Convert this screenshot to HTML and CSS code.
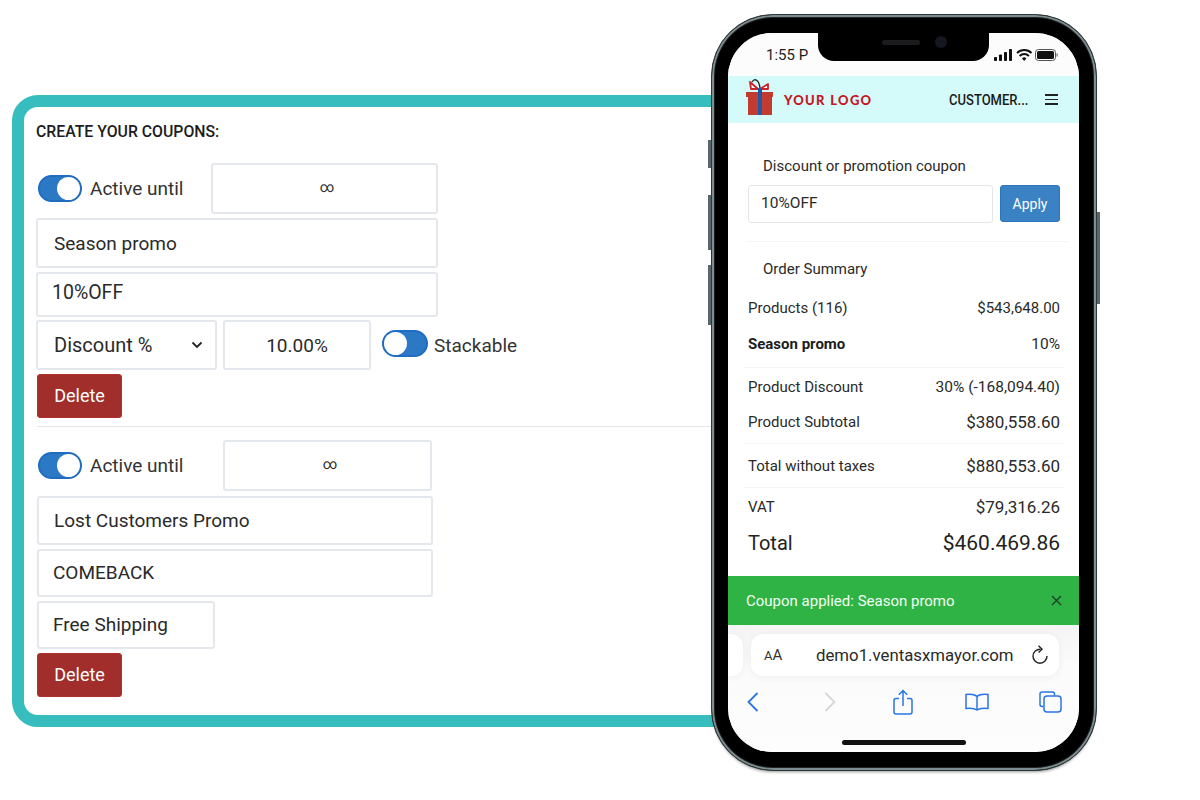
FILE: index.html
```html
<!DOCTYPE html>
<html lang="en">
<head>
  <meta charset="UTF-8">
  <title>Create your coupons</title>
  <link rel="stylesheet" href="styles.css">
</head>
<body>
  <div class="card">
    <h1 class="card-title">CREATE YOUR COUPONS:</h1>

    <div class="coupon">
      <div class="row row-active">
        <span class="toggle on"></span>
        <span class="toggle-label">Active until</span>
        <div class="field field-until">∞</div>
      </div>
      <div class="field field-name">Season promo</div>
      <div class="field field-code">10%OFF</div>
      <div class="row row-type">
        <div class="field field-select">Discount %
          <svg class="chevron" width="12" height="8" viewBox="0 0 12 8"><path d="M1.5 1.5 6 6l4.500-4.500" fill="none" stroke="#222" stroke-width="1.8"/></svg>
        </div>
        <div class="field field-amount">10.00%</div>
        <span class="toggle off"></span>
        <span class="toggle-label stack-label">Stackable</span>
      </div>
      <button class="btn-delete">Delete</button>
    </div>

    <hr class="card-rule">

    <div class="coupon coupon-second">
      <div class="row row-active">
        <span class="toggle on"></span>
        <span class="toggle-label">Active until</span>
        <div class="field field-until">∞</div>
      </div>
      <div class="field field-name">Lost Customers Promo</div>
      <div class="field field-code">COMEBACK</div>
      <div class="field field-shipping">Free Shipping</div>
      <button class="btn-delete">Delete</button>
    </div>
  </div>

  <!-- phone sits on top of the card -->
  <div class="phone">
    <span class="side-btn side-a"></span>
    <span class="side-btn side-b"></span>
    <span class="side-btn side-c"></span>
    <span class="side-btn side-d"></span>
    <div class="screen">
      <div class="notch"><span class="speaker"></span><span class="camera"></span></div>

      <div class="status-bar">
        <span class="clock">1:55 P</span>
        <svg class="status-icons" width="64" height="14" viewBox="0 0 64 14">
          <rect x="0" y="9" width="3" height="4" rx=".8" fill="#111"/>
          <rect x="5" y="6.500" width="3" height="6.500" rx=".8" fill="#111"/>
          <rect x="10" y="4" width="3" height="9" rx=".8" fill="#111"/>
          <rect x="15" y="1" width="3" height="12" rx=".8" fill="#111"/>
          <path d="M23 5a10.500 10.500 0 0 1 14.500 0M25.600 8a6.700 6.700 0 0 1 9.300 0" fill="none" stroke="#111" stroke-width="2"/>
          <path d="M28 10.400a3.200 3.200 0 0 1 4.400 0L30.200 13z" fill="#111"/>
          <rect x="41.500" y="1.500" width="20" height="11" rx="3" fill="none" stroke="#555" stroke-width="1"/>
          <rect x="43" y="3" width="17" height="8" rx="1.600" fill="#111"/>
          <rect x="62.500" y="5.300" width="1.300" height="3.400" rx=".6" fill="#777"/>
        </svg>
      </div>

      <header class="shop-header">
        <svg class="gift" width="30" height="39" viewBox="0 0 30 39">
          <path d="M5 5l8 7H6zM23 7l-8 5h8z" fill="#fff" stroke="#cc2229" stroke-width="1.800" stroke-linejoin="round"/>
          <path d="M7 5c2-4 7-3 8 6" fill="none" stroke="#222" stroke-width="1.300"/>
          <rect x="1" y="15" width="27" height="5" fill="#c23b30"/>
          <rect x="3" y="20" width="24" height="18" fill="#c23b30"/>
          <rect x="13" y="11" width="4" height="27" fill="#2456a8"/>
        </svg>
        <span class="logo-text">YOUR LOGO</span>
        <span class="customer">CUSTOMER...</span>
        <span class="burger"><i></i><i></i><i></i></span>
      </header>

      <main class="checkout">
        <div class="section-label">Discount or promotion coupon</div>
        <div class="coupon-form">
          <div class="coupon-input">10%OFF</div>
          <button class="btn-apply">Apply</button>
        </div>
        <div class="rule rule-a"></div>
        <div class="section-label summary-label">Order Summary</div>
        <div class="sum-row r36"><span>Products (116)</span><span>$543,648.00</span></div>
        <div class="sum-row r36"><b>Season promo</b><span class="mid">10%</span></div>
        <div class="rule rule-b"></div>
        <div class="sum-row r38"><span>Product Discount</span><span class="mid">30% (-168,094.40)</span></div>
        <div class="sum-row r32"><span>Product Subtotal</span><span class="big">$380,558.60</span></div>
        <div class="rule rule-c"></div>
        <div class="sum-row r43"><span>Total without taxes</span><span class="big">$880,553.60</span></div>
        <div class="rule"></div>
        <div class="sum-row r38"><span>VAT</span><span class="big">$79,316.26</span></div>
        <div class="sum-row total"><span>Total</span><span class="total-value">$460.469.86</span></div>
      </main>

      <div class="toast">
        <span>Coupon applied: Season promo</span>
        <svg width="11" height="11" viewBox="0 0 11 11"><path d="M1 1l9 9M10 1l-9 9" stroke="#1f3d28" stroke-width="1.400"/></svg>
      </div>

      <div class="browser">
        <div class="address-row">
          <div class="prev-tab"></div>
          <div class="address">
            <span class="aa"><small>A</small>A</span>
            <span class="url">demo1.ventasxmayor.com</span>
            <svg width="18" height="20" viewBox="0 0 18 20"><path d="M9.500 4.200A7 7 0 1 0 16 11" fill="none" stroke="#222" stroke-width="1.400"/><path d="M7.500 .8 11 4.200 7.500 7.400" fill="none" stroke="#222" stroke-width="1.400"/></svg>
          </div>
        </div>
        <div class="toolbar">
          <svg width="14" height="22" viewBox="0 0 14 22"><path d="M11.500 2 2.500 11l9 9" fill="none" stroke="#2a74e6" stroke-width="1.800"/></svg>
          <svg class="tool-forward" width="14" height="22" viewBox="0 0 14 22"><path d="M2.500 2l9 9-9 9" fill="none" stroke="#d4d6d8" stroke-width="1.800"/></svg>
          <svg class="tool-share" width="20" height="26" viewBox="0 0 20 26"><path d="M6 9.500H3a2 2 0 0 0-2 2V23a2 2 0 0 0 2 2h14a2 2 0 0 0 2-2V11.500a2 2 0 0 0-2-2h-3M10 17V2M5.800 5.800 10 1.500l4.200 4.300" fill="none" stroke="#2a74e6" stroke-width="1.500"/></svg>
          <svg class="tool-book" width="24" height="18" viewBox="0 0 24 18"><path d="M12 3.500C10 1.800 6 1 1 1.500V15.500C6 15 10 15.500 12 17c2-1.500 6-2 11-1.500V1.500C18 1 14 1.800 12 3.500zM12 3.500V17" fill="none" stroke="#2a74e6" stroke-width="1.500"/></svg>
          <svg class="tool-tabs" width="23" height="22" viewBox="0 0 23 22"><path d="M4.500 15.500H3a2 2 0 0 1-2-2V3a2 2 0 0 1 2-2h10.500a2 2 0 0 1 2 2v1.500" fill="none" stroke="#2a74e6" stroke-width="1.500"/><rect x="5" y="5" width="17" height="16" rx="3" fill="none" stroke="#2a74e6" stroke-width="1.500"/></svg>
        </div>
        <div class="home-bar"></div>
      </div>
    </div>
  </div>
</body>
</html>
```

FILE: styles.css
```css
* {
  margin: 0;
  padding: 0;
  box-sizing: border-box;
}
body {
  font-family: Roboto, "Liberation Sans", sans-serif;
  background: #fff;
  color: #222;
  width: 1200px;
  height: 800px;
  position: relative;
  overflow: hidden;
  padding: 95px 0 0 12px;
}

/* coupon card */
.card {
  width: 730px;
  height: 632px;
  background: #fff;
  border: 12px solid #38bdbe;
  border-radius: 26px;
  padding: 12px;
}
.card-title {
  font-size: 17px;
  font-weight: 500;
  line-height: 24px;
  color: #1c1c1c;
  margin-bottom: 20px;
  transform: scaleX(.93);
  transform-origin: left center;
  white-space: nowrap;
}
.row {
  display: flex;
  align-items: center;
}
.field {
  border: 2px solid #e4e7ec;
  border-radius: 3px;
  font-size: 19px;
  color: #2a2a2a;
  display: flex;
  align-items: center;
  background: #fff;
}
.row-active {
  height: 51px;
  margin-bottom: 4px;
  padding-left: 2px;
}
.toggle-label {
  font-size: 19px;
  color: #333;
  margin-left: 8px;
}
.toggle {
  display: block;
  flex: none;
  width: 44px;
  height: 27px;
  border-radius: 14px;
  background: #2b78c5;
  border: 2px solid #1f6cc0;
  position: relative;
}
.toggle::after {
  content: "";
  position: absolute;
  top: 0;
  width: 23px;
  height: 23px;
  border-radius: 50%;
  background: #fff;
}
.toggle.on::after { right: 0; }
.toggle.off::after { left: 0; }
.field-until {
  width: 227px;
  height: 51px;
  margin-left: 28px;
  justify-content: center;
  padding-left: 4px;
  padding-bottom: 3px;
  font-size: 14px;
}
.field-name {
  width: 402px;
  height: 50px;
  margin-bottom: 4px;
  padding-left: 16px;
}
.field-code {
  width: 402px;
  height: 45px;
  margin-bottom: 3px;
  padding: 0 0 4px 14px;
  font-size: 19.500px;
}
.row-type {
  height: 50px;
  margin-bottom: 4px;
}
.field-select {
  width: 181px;
  height: 50px;
  padding: 0 12px 0 16px;
  justify-content: space-between;
  font-size: 20px;
}
.field-amount {
  width: 148px;
  height: 50px;
  margin-left: 6px;
  justify-content: center;
}
.row-type .toggle {
  margin-left: 11px;
  width: 46px;
  margin-top: -4px;
}
.stack-label { margin-left: 6px; }
.btn-delete {
  display: block;
  width: 85px;
  height: 44px;
  margin-left: 1px;
  padding-bottom: 2px;
  background: #a12e2a;
  border: 1px solid #b0302b;
  border-radius: 3px;
  color: #fff;
  font-family: inherit;
  font-size: 18px;
}
.card-rule {
  border: none;
  border-top: 1px solid #e2e5ea;
  margin: 8px 0 13px 1px;
}
.coupon-second .row-active .field-until {
  width: 209px;
  margin-left: 40px;
}
.coupon-second .row-active { margin-bottom: 5px; }
.coupon-second .field-name {
  width: 396px;
  height: 49px;
  margin-left: 1px;
  padding-left: 15px;
}
.coupon-second .field-code {
  width: 396px;
  height: 48px;
  margin-left: 1px;
  padding: 0 0 2px 14px;
  margin-bottom: 4px;
  font-size: 19px;
}
.field-shipping {
  width: 178px;
  height: 48px;
  margin: 0 0 4px 1px;
  padding: 0 0 2px 14px;
}

/* phone */
.phone {
  position: absolute;
  left: 711px;
  top: 14px;
  width: 386px;
  height: 757px;
  background: #000;
  border: 1px solid #2f383a;
  border-radius: 62px;
  padding: 18px 17px 18px 16px;
  box-shadow: inset 0 0 0 2px #7c8d90, inset 0 0 0 3px #222, 0 3px 3px -2px rgba(0, 0, 0, .4);
}
.side-btn {
  position: absolute;
  width: 3px;
  background: #56666c;
}
.side-a { left: -4px; top: 125px; height: 28px; }
.side-b { left: -4px; top: 180px; height: 55px; }
.side-c { left: -4px; top: 250px; height: 60px; }
.side-d { right: -4px; top: 197px; height: 92px; }
.screen {
  position: relative;
  width: 351px;
  height: 719px;
  background: #fff;
  border-radius: 44px;
  overflow: hidden;
  display: flex;
  flex-direction: column;
}
.notch {
  position: absolute;
  left: 90px;
  top: 0;
  width: 171px;
  height: 28px;
  background: #000;
  border-radius: 0 0 16px 16px;
}
.speaker {
  position: absolute;
  left: 64px;
  top: 7px;
  width: 38px;
  height: 5px;
  border-radius: 3px;
  background: #1c1c1e;
}
.camera {
  position: absolute;
  left: 117px;
  top: 3px;
  width: 12px;
  height: 12px;
  border-radius: 50%;
  background: #14171f;
}
.status-bar {
  height: 43px;
  flex: none;
  background: #fcfcfc;
  display: flex;
  justify-content: space-between;
  align-items: center;
  padding: 0 21px 0 38px;
}
.clock {
  font-size: 15px;
  color: #1c1c1c;
}
.shop-header {
  height: 47px;
  flex: none;
  background: #d5fafa;
  display: flex;
  align-items: center;
  padding: 0 21px 0 17px;
}
.gift { flex: none; margin-top: -6px; }
.logo-text {
  font-family: Lato, "Liberation Sans", sans-serif;
  font-size: 13px;
  font-weight: 900;
  letter-spacing: 1.300px;
  color: #c5161d;
  margin-left: 9px;
}
.customer {
  font-size: 14px;
  font-weight: 500;
  color: #1a1a1a;
  margin-left: auto;
  transform: scaleX(.93);
  transform-origin: right center;
  white-space: nowrap;
}
.burger {
  display: flex;
  flex-direction: column;
  gap: 3px;
  width: 13px;
  margin-left: 17px;
}
.burger i {
  display: block;
  height: 1.500px;
  background: #222;
}

.checkout {
  flex: none;
  height: 453px;
  padding: 32px 19px 0 20px;
  font-size: 15px;
  color: #2a2a2a;
}
.section-label {
  height: 22px;
  line-height: 22px;
  padding-left: 15px;
  font-size: 15px;
}
.coupon-form {
  display: flex;
  gap: 7px;
  margin-top: 8px;
}
.coupon-input {
  width: 245px;
  height: 38px;
  border: 1.500px solid #e2e5ea;
  border-radius: 3px;
  font-size: 15.500px;
  line-height: 35px;
  padding-left: 12px;
}
.btn-apply {
  width: 60px;
  height: 37px;
  background: #3b82c4;
  border: 1px solid #2f74b8;
  border-radius: 3px;
  color: #fff;
  font-family: inherit;
  font-size: 14px;
}
.rule {
  height: 1px;
  background: #f3f4f5;
  margin: 0 -5px;
}
.rule-a { margin: 18px -8px 16px -1px; }
.rule-b { margin-top: 5px; }
.rule-c { margin-top: 5px; }
.summary-label { margin-bottom: 10px; }
.sum-row {
  display: flex;
  justify-content: space-between;
  align-items: center;
}
.sum-row b { font-weight: 700; color: #1c1c1c; }
.mid { font-size: 15.500px; }
.big { font-size: 17px; }
.r32 { height: 32px; }
.r36 { height: 36px; }
.r38 { height: 38px; }
.r43 { height: 43px; }
.total {
  height: 34px;
  font-size: 20px;
  color: #222;
}
.total-value { font-size: 21px; }

.toast {
  height: 49px;
  flex: none;
  background: #2fb344;
  color: #f2fff4;
  font-size: 15px;
  display: flex;
  justify-content: space-between;
  align-items: center;
  padding: 0 17px 0 18px;
}

.browser {
  flex: 1;
  background: linear-gradient(#f4f4f4, #fbfbfb 30%, #fdfdfd);
  padding-top: 9px;
  position: relative;
}
.address-row {
  display: flex;
  gap: 8px;
}
.prev-tab {
  width: 15px;
  height: 42px;
  background: #fff;
  border-radius: 0 12px 12px 0;
  box-shadow: 0 1px 8px rgba(0, 0, 0, .06);
}
.address {
  width: 308px;
  height: 42px;
  background: #fff;
  border-radius: 12px;
  box-shadow: 0 1px 8px rgba(0, 0, 0, .06);
  display: flex;
  align-items: center;
  padding: 0 10px 0 13px;
}
.aa {
  font-size: 15px;
  color: #333;
  width: 52px;
}
.aa small { font-size: 13px; }
.url {
  flex: 1;
  font-size: 16.800px;
  color: #2a2a2a;
}
.toolbar {
  display: flex;
  align-items: center;
  padding-left: 18px;
  margin-top: 12px;
  height: 28px;
}
.tool-forward { margin-left: 63px; }
.tool-share { margin-left: 56px; }
.tool-book { margin-left: 52px; }
.tool-tabs { margin-left: 50px; }
.home-bar {
  position: absolute;
  left: 114px;
  bottom: 7px;
  width: 124px;
  height: 5px;
  border-radius: 3px;
  background: #111;
}
```
